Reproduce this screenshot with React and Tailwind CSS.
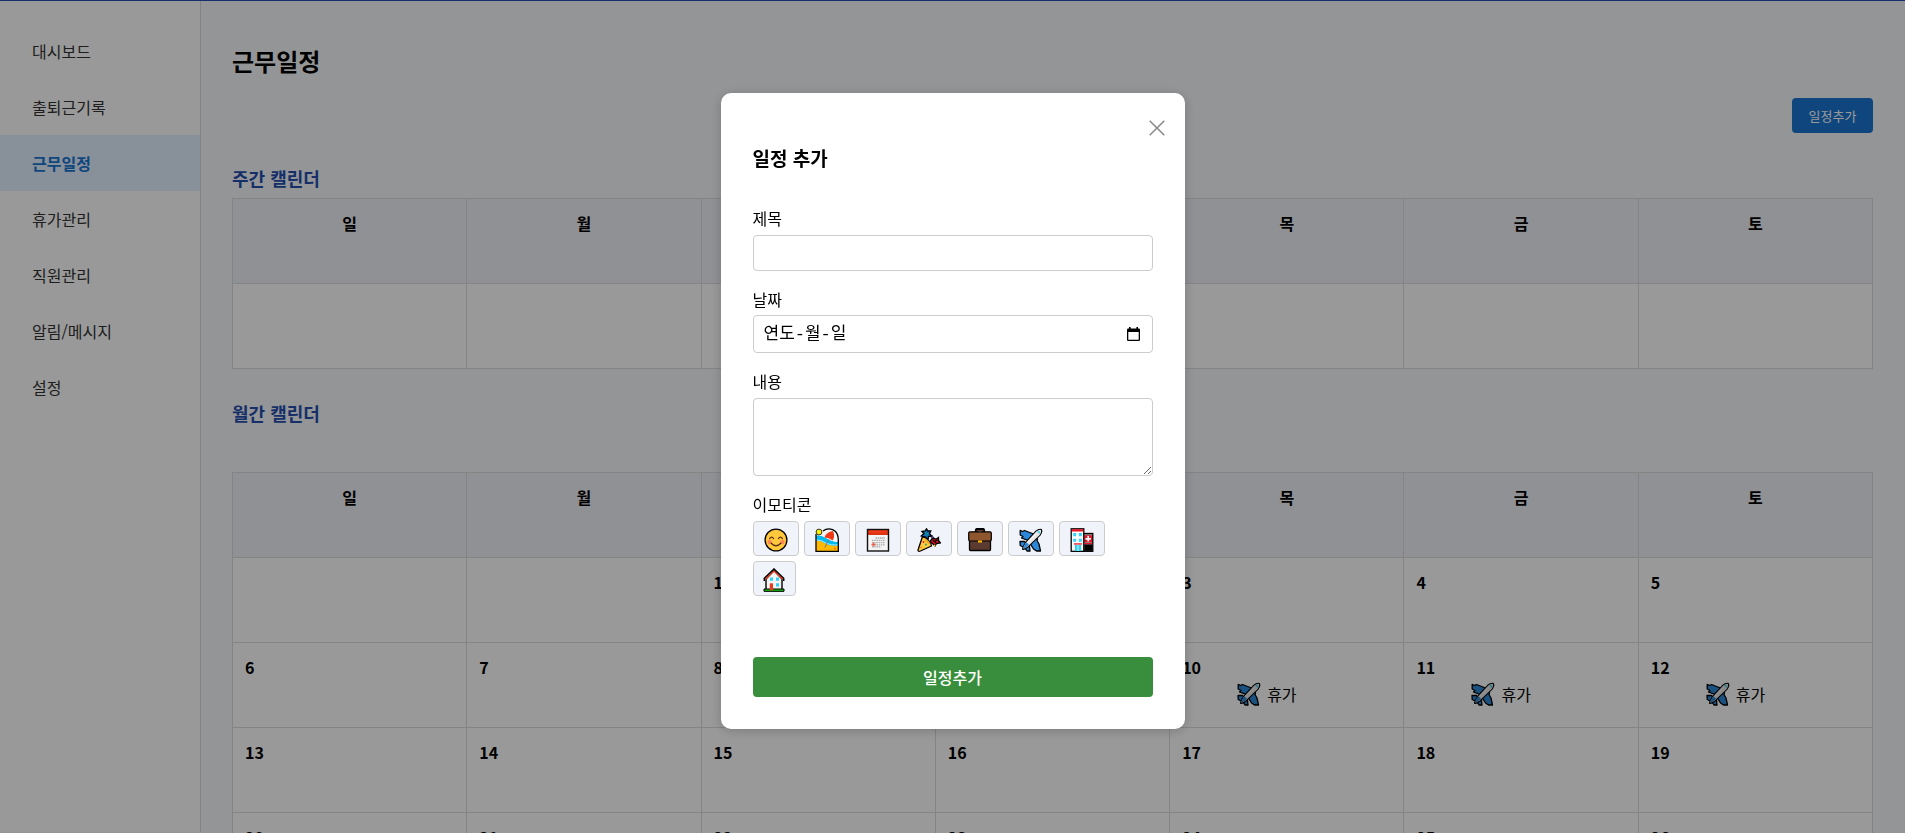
import React from "react";

const MENU = ["대시보드", "출퇴근기록", "근무일정", "휴가관리", "직원관리", "알림/메시지", "설정"];
const WEEKDAYS = ["일", "월", "화", "수", "목", "금", "토"];
const FIRST_WEEKDAY = 2;
const DAYS_IN_MONTH = 31;
const VACATION_DAYS = [10, 11, 12];

const WEEKS = Array.from({ length: 5 }, (_, w) =>
  Array.from({ length: 7 }, (_, d) => {
    const day = w * 7 + d - FIRST_WEEKDAY + 1;
    return day >= 1 && day <= DAYS_IN_MONTH ? day : null;
  })
);

function Icon({ children }) {
  return (
    <svg viewBox="0 0 24 24" className="block h-6 w-6 shrink-0" aria-hidden="true">
      {children}
    </svg>
  );
}

function Smile() {
  return (
    <Icon>
      <circle cx="12" cy="12" r="10.9" fill="#ffc83d" stroke="#000" strokeWidth="1.3" />
      <circle cx="5.6" cy="14" r="2.2" fill="#ff8a55" />
      <circle cx="18.4" cy="14" r="2.2" fill="#ff8a55" />
      <path d="M5.6 10.6q2-3 4 0M14.4 10.6q2-3 4 0" fill="none" stroke="#5a3216" strokeWidth="1.2" strokeLinecap="round" />
      <path d="M7.2 15.2q4.8 5 9.6 0" fill="none" stroke="#5a3216" strokeWidth="1.4" strokeLinecap="round" />
    </Icon>
  );
}

function Beach() {
  return (
    <Icon>
      <path d="M1 4.5L8 3C11 .2 17-.2 20.500 3.500Q23.300 6.500 23.300 12V23.300H1Z" fill="#f4f4f4" />
      <path d="M1 7.500Q6 7 10 9.500T17 13T23.300 14V18H1Z" fill="#00bcf2" />
      <path d="M1 12.500Q6 12.500 10.500 15.500T23.300 17.500V23.300H1Z" fill="#ffb900" />
      <path d="M1 11.800Q6 11.800 10.500 14.800T23.300 16.900" fill="none" stroke="#a4ecff" strokeWidth="1" />
      <path d="M9.500 9.500Q11 4 18 3Q20.500 8 17.800 12.500Q14 9.500 9.500 9.500Z" fill="#f03a17" />
      <path d="M18.500 3Q22 6 21.800 13.500L17.800 13Q20.500 8 18.500 3Z" fill="#fff" />
      <path d="M14 11.300L9.800 19.500" stroke="#777" strokeWidth="1" />
      <circle cx="20" cy="20.500" r=".9" fill="#f7630c" />
      <path d="M1 6V23.300H23.300V12Q23.300 6.500 20.500 3.500C17 0 11.500.2 8 3" fill="none" stroke="#000" strokeWidth="1.300" />
      <circle cx="4" cy="4" r="2.900" fill="#fff100" stroke="#222" strokeWidth=".9" />
    </Icon>
  );
}

function CalendarSheet() {
  return (
    <Icon>
      <rect x="1.500" y="1.500" width="21" height="21.500" fill="#f4f4f4" />
      <path d="M2 2H22V7H2Z" fill="#f03a17" />
      <path d="M2 4.500H22V7H2Z" fill="#c72c10" opacity=".5" />
      <path d="M9.500 10H19M6 12.300H19M6 14.600H19M6 16.900H19M6 18.800H15" fill="none" stroke="#a8a8a8" strokeWidth="1.300" strokeDasharray="1.500 .7" />
      <path d="M7.500 14.500V18.500M5.500 16.500H9.500" stroke="#f0604a" strokeWidth="1.300" />
      <rect x="1.500" y="1.500" width="21" height="21.500" fill="none" stroke="#111" strokeWidth="1.400" />
    </Icon>
  );
}

function Party() {
  return (
    <Icon>
      <path d="M5.500 8.500L1 22Q1 24 3.500 23L14.500 18Q13 11.500 5.500 8.500Z" fill="#ffc83d" stroke="#000" strokeWidth="1.300" strokeLinejoin="round" />
      <path d="M7 9.500Q12.500 12 13.800 17Q8.500 14.500 7 9.500Z" fill="#e6a823" />
      <path d="M5 3.500L8 3L9.500.800L11 3L13.800 3L12.500 5.500L14.500 8L11.500 8.500L11 11.500L8.500 9L4.300 8L7 5.500Z" fill="#0f6cbd" stroke="#000" strokeWidth="1.300" />
      <path d="M8.300 4L9.500 7.500M11.500 5L9 6.500" stroke="#13a085" strokeWidth="1" />
      <path d="M13.500 12.500L16.500 10L19 11.300L21.500 9.500L21.500 12.500L23.500 15L19.500 15.500L18 18L16 16L13.500 14.500Z" fill="#c50f1f" stroke="#000" strokeWidth="1.300" />
      <path d="M16 12.200L19 14.600M20.500 12L17.500 13.500" stroke="#000" strokeWidth="1.200" />
      <path d="M14 9.600L16.300 8.600" stroke="#000" strokeWidth="2.800" />
      <path d="M14.300 9.500L16 8.800" stroke="#886ce4" strokeWidth="1.300" />
      <path d="M16.500 18.200L18.200 16.900" stroke="#fce100" strokeWidth="1.300" />
      <circle cx="6.500" cy="14" r=".9" fill="#e81224" />
      <circle cx="9" cy="16.500" r=".9" fill="#16a085" />
      <circle cx="4" cy="19.500" r=".7" fill="#f7630c" />
    </Icon>
  );
}

function Briefcase() {
  return (
    <Icon>
      <path d="M8.500 4V2.200Q8.500 1.500 9.300 1.500H14.700Q15.500 1.500 15.500 2.200V4" fill="none" stroke="#000" strokeWidth="3.200" />
      <path d="M8.700 4.500V2.500H15.300V4.500" fill="none" stroke="#603d30" strokeWidth="1" />
      <rect x="1.500" y="10" width="21" height="12.500" rx="1" fill="#5b3a2f" stroke="#000" strokeWidth="1.300" />
      <path d="M2 3.800H22Q23.300 3.800 23.300 5V11.500Q23.300 13 21.800 13H2.200Q.7 13 .7 11.500V5Q.7 3.800 2 3.800Z" fill="#8e562e" stroke="#000" strokeWidth="1.200" />
      <rect x="10" y="12.500" width="4" height="2" fill="#ffb900" />
    </Icon>
  );
}

function Plane() {
  return (
    <Icon>
      <path d="M1.200 2.300L3.500 3.500L5.500 2.500L14.500 6L9 12.300L2.500 10L4 8.500L1.200 7Z" fill="#2b88d8" stroke="#000" strokeWidth="1.300" strokeLinejoin="round" />
      <path d="M17 9.500L18.500 11L18 12.500L20 16L21.500 23L17.500 23L14.500 21L11 15.300Z" fill="#2b88d8" stroke="#000" strokeWidth="1.300" strokeLinejoin="round" />
      <path d="M1 13.500L5.500 13.500L8 16L10.500 18.500L11 23L8 23L6 20L1.200 17.500Z" fill="#2b88d8" stroke="#000" strokeWidth="1.300" strokeLinejoin="round" />
      <path d="M16.500 2.800Q19.500.3 22.700 1Q24.300 4 21.500 7.500L9 19.700Q5 22.700 3 21.700Q3 19 6 14.500Z" fill="#000" />
      <path d="M17.200 3.500Q20 1.300 22 1.900Q23 4 20.700 6.900L8.700 18.500Q5.500 21 4.200 20.500Q4.200 18.500 7 14.700Z" fill="#e6e6e6" />
      <path d="M7.500 14.300L10 16.800Q6.500 20.500 4.200 20.500Q4.200 18.500 7.500 14.300Z" fill="#2b88d8" />
      <path d="M18.800 3L20.900 5.100" stroke="#31d2f7" strokeWidth="1.500" />
      <path d="M8.500 14.200L16.500 6.500" stroke="#fff" strokeWidth="1" />
    </Icon>
  );
}

function Hospital() {
  return (
    <Icon>
      <rect x="13" y="5.500" width="9.800" height="17.800" fill="#8a8a8a" stroke="#000" strokeWidth="1.300" />
      <rect x="14.400" y="7.300" width="7.600" height="6.900" fill="#e81224" />
      <rect x="1.200" y=".8" width="12.600" height="22.500" fill="#fff" stroke="#000" strokeWidth="1.300" />
      <rect x="1.800" y="1.200" width="11.500" height="2.300" fill="#e81224" />
      <path d="M3.200 5H6.200V8.200H3.200ZM8.800 5H11.800V8.200H8.800ZM3.200 10.700H6.200V13.700H3.200ZM8.800 10.700H11.800V13.700H8.800Z" fill="#31d2f7" />
      <rect x="4" y="15.300" width="8" height="1.300" fill="#e81224" />
      <rect x="5" y="17" width="6" height="6" fill="#31d2f7" />
      <path d="M8 17V23" stroke="#fff" strokeWidth=".8" />
      <path d="M18.200 8.100V13.500M15.500 10.800H20.900" stroke="#fff" strokeWidth="1.700" />
      <rect x="14.400" y="15" width="7.800" height="1.200" fill="#e81224" />
      <rect x="14.400" y="16.500" width="7.800" height="6.300" fill="#000" />
    </Icon>
  );
}

function House() {
  return (
    <Icon>
      <path d="M4 11L12 2.500L20 11V22.500H4Z" fill="#f4f4f4" stroke="#000" strokeWidth="1.400" />
      <path d="M2.300 13V10.300L12 1L21.700 10.300V13" fill="none" stroke="#000" strokeWidth="1.500" />
      <path d="M3.300 11.300L12 3L20.700 11.300" fill="none" stroke="#f03a17" strokeWidth="1.200" />
      <path d="M8 9.500H11V12.800H8ZM14 9.500H17V12.800H14ZM14 15.300H17V18.500H14Z" fill="#31d2f7" />
      <path d="M2 21H22V23.300H2Z" fill="#16c60c" stroke="#000" strokeWidth="1" />
      <rect x="7.800" y="15.300" width="3.200" height="7" fill="#e63b1e" />
    </Icon>
  );
}

const EMOTICONS = [
  { name: "미소", Art: Smile, width: "w-[46px]" },
  { name: "해변", Art: Beach, width: "w-[46px]" },
  { name: "달력", Art: CalendarSheet, width: "w-[46px]" },
  { name: "파티", Art: Party, width: "w-[46px]" },
  { name: "서류가방", Art: Briefcase, width: "w-[46px]" },
  { name: "비행기", Art: Plane, width: "w-[46px]" },
  { name: "병원", Art: Hospital, width: "w-[46px]" },
  { name: "집", Art: House, width: "w-[43px]" },
];

function CalendarTable({ weeks }) {
  return (
    <table className="w-full table-fixed border-collapse bg-white">
      <thead>
        <tr>
          {WEEKDAYS.map((d) => (
            <th key={d} className="h-[85px] border border-[#dddddd] bg-[#f0f2f9] p-3 align-top font-bold leading-6">
              {d}
            </th>
          ))}
        </tr>
      </thead>
      <tbody>
        {weeks.map((week, i) => (
          <tr key={i}>
            {week.map((day, j) => (
              <td key={j} className="h-[85px] border border-[#dddddd] p-3 align-top leading-6">
                {day && <div className="font-bold">{day}</div>}
                {VACATION_DAYS.includes(day) && (
                  <div className="ml-[55px] mt-[3px] flex items-center gap-1.5">
                    <Plane />
                    <span>휴가</span>
                  </div>
                )}
              </td>
            ))}
          </tr>
        ))}
      </tbody>
    </table>
  );
}

function ScheduleModal() {
  const field = "block w-full rounded border border-[#cccccc] bg-white px-2.5";
  return (
    <div className="fixed inset-0 z-20 flex items-center justify-center bg-black/40 pb-[11px]">
      <div role="dialog" aria-modal="true" aria-labelledby="modal-title" className="relative w-[464px] rounded-[10px] bg-white p-8 shadow-[0_2px_12px_rgba(0,0,0,0.2)]">
        <button type="button" aria-label="닫기" className="absolute right-5 top-[27px]">
          <svg viewBox="0 0 16 16" className="block h-4 w-4" aria-hidden="true">
            <path d="M.7.7L15.300 15.300M15.300.7L.7 15.300" stroke="#888" strokeWidth="1.500" />
          </svg>
        </button>
        <form className="flex flex-col" onSubmit={(e) => e.preventDefault()}>
          <h3 id="modal-title" className="mt-[19px] text-[19px] font-bold leading-7">일정 추가</h3>
          <div className="mt-[34px]">
            <label htmlFor="title" className="mb-[5px] block leading-6">제목</label>
            <input id="title" type="text" className={`${field} h-9`} />
          </div>
          <div className="mt-4">
            <label htmlFor="date" className="mb-1 block leading-6">날짜</label>
            <div className="flex h-[38px] items-center rounded border border-[#cccccc] bg-white pl-2.5 pr-3">
              <input
                id="date"
                type="text"
                placeholder="연도-월-일"
                className="min-w-0 flex-1 pt-0.5 font-['Liberation_Mono','Noto_Sans_CJK_KR',monospace] text-[17px] placeholder:text-black"
              />
              <button type="button" aria-label="날짜 선택">
                <svg viewBox="0 0 13 15" className="block h-[15px] w-[13px]" aria-hidden="true">
                  <path d="M2 0H3.600V1.500H9.400V0H11V1.500H11.800Q13 1.500 13 2.700V12.800Q13 14 11.800 14H1.200Q0 14 0 12.800V2.700Q0 1.500 1.200 1.500H2ZM1.300 5V12.700H11.700V5Z" fillRule="evenodd" fill="#000" />
                </svg>
              </button>
            </div>
          </div>
          <div className="mt-4">
            <label htmlFor="content" className="mb-[5px] block leading-6">내용</label>
            <textarea id="content" className={`${field} h-[78px] resize-y py-2`} />
          </div>
          <div className="mt-4" role="group" aria-labelledby="emoticon-label">
            <div id="emoticon-label" className="mb-[5px] leading-6">이모티콘</div>
            <div className="flex max-w-[360px] flex-wrap gap-[5px]">
              {EMOTICONS.map(({ name, Art, width }) => (
                <button key={name} type="button" aria-label={name} className={`${width} flex h-[35px] items-center justify-center rounded border border-[#cccccc] bg-[#f0f3f9] pt-[3px]`}>
                  <Art />
                </button>
              ))}
            </div>
          </div>
          <button type="submit" className="mt-[61px] h-10 rounded bg-[#388e3c] font-medium text-white">일정추가</button>
        </form>
      </div>
    </div>
  );
}

export default function App() {
  return (
    <div lang="ko" className="flex h-screen overflow-hidden border-t border-[#264fb0] bg-[#f7f9fb] font-['Noto_Sans_CJK_KR',sans-serif] text-base text-black">
      <aside className="z-10 mb-px -mr-px w-[201px] shrink-0 border-r border-[#dddddd] bg-white pt-[22px]">
        <nav className="flex flex-col">
          {MENU.map((label) => (
            <a
              key={label}
              href="#"
              aria-current={label === "근무일정" ? "page" : undefined}
              className={
                label === "근무일정"
                  ? "bg-[#e3f0ff] px-8 py-4 font-bold leading-6 text-[#1976d2]"
                  : "px-8 py-4 leading-6 text-[#333333]"
              }
            >
              {label}
            </a>
          ))}
        </nav>
      </aside>
      <main className="flex min-w-0 flex-1 flex-col px-8 pt-[42px]">
        <h1 className="text-2xl font-bold leading-9">근무일정</h1>
        <button type="button" className="mt-[19px] h-[35px] min-w-[81px] shrink-0 self-end rounded bg-[#1976d2] px-4 text-[13px] text-white">
          일정추가
        </button>
        <section className="mt-8 flex flex-col gap-[7px]">
          <h2 className="text-lg font-bold leading-[26px] text-[#264fb0]">주간 캘린더</h2>
          <CalendarTable weeks={[Array(7).fill(null)]} />
        </section>
        <section className="mt-[31px] flex flex-col gap-[46px]">
          <h2 className="text-lg font-bold leading-[26px] text-[#264fb0]">월간 캘린더</h2>
          <CalendarTable weeks={WEEKS} />
        </section>
      </main>
      <ScheduleModal />
    </div>
  );
}
